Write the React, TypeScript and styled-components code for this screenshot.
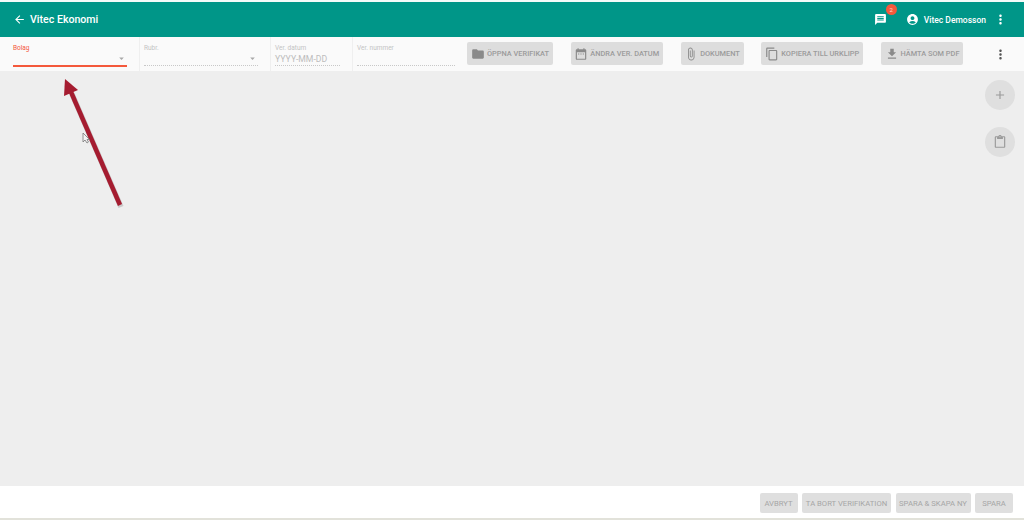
import { createGlobalStyle, styled } from 'styled-components'
import {
  MdAccountCircle,
  MdAdd,
  MdArrowBack,
  MdArrowDropDown,
  MdAttachFile,
  MdContentCopy,
  MdContentPaste,
  MdDateRange,
  MdFileDownload,
  MdFolder,
  MdMessage,
  MdMoreVert,
} from 'react-icons/md'

const GlobalStyle = createGlobalStyle`
  html, body {
    margin: 0;
    padding: 0;
    width: 100%;
    height: 100%;
    overflow: hidden;
    background: #ffffff;
    font-family: Roboto, "Liberation Sans", sans-serif;
  }
`

const toolButtons = [
  { label: 'ÖPPNA VERIFIKAT', width: 86, icon: <MdFolder size={14} /> },
  { label: 'ÄNDRA VER. DATUM', width: 92, icon: <MdDateRange size={14} /> },
  { label: 'DOKUMENT', width: 63, icon: <MdAttachFile size={14} /> },
  { label: 'KOPIERA TILL URKLIPP', width: 102, icon: <MdContentCopy size={14} /> },
  { label: 'HÄMTA SOM PDF', width: 82, icon: <MdFileDownload size={14} /> },
]

const footerButtons = [
  { label: 'AVBRYT', width: 38 },
  { label: 'TA BORT VERIFIKATION', width: 89 },
  { label: 'SPARA & SKAPA NY', width: 75 },
  { label: 'SPARA', width: 38 },
]

const App = () => {
  return (
    <Page>
      <GlobalStyle />
      <Header>
        <BackTitle>
          <MdArrowBack size={13} />
          <Title>Vitec Ekonomi</Title>
        </BackTitle>
        <HeaderRight>
          <MessageButton>
            <MdMessage size={13} />
            <Badge>2</Badge>
          </MessageButton>
          <UserBox>
            <MdAccountCircle size={13} />
            <UserName>Vitec Demosson</UserName>
          </UserBox>
          <MdMoreVert size={15} />
        </HeaderRight>
      </Header>

      <Toolbar>
        <Field width={114} pad={13} divider>
          <FieldLabel active>Bolag</FieldLabel>
          <SelectArrow>
            <MdArrowDropDown size={11} />
          </SelectArrow>
          <ActiveLine />
        </Field>
        <Field width={114} pad={5} divider>
          <FieldLabel>Rubr.</FieldLabel>
          <SelectArrow>
            <MdArrowDropDown size={11} />
          </SelectArrow>
          <FieldLine />
        </Field>
        <Field width={65} pad={5} divider>
          <FieldLabel>Ver. datum</FieldLabel>
          <FieldValue>YYYY-MM-DD</FieldValue>
          <FieldLine />
        </Field>
        <Field width={98} pad={5}>
          <FieldLabel>Ver. nummer</FieldLabel>
          <FieldLine />
        </Field>
        <ToolButtons>
          {toolButtons.map(item => (
            <ToolButton key={item.label} width={item.width}>
              {item.icon}
              <span>{item.label}</span>
            </ToolButton>
          ))}
        </ToolButtons>
        <ToolMenu>
          <MdMoreVert size={15} />
        </ToolMenu>
      </Toolbar>

      <Main>
        <Arrow width="80" height="135" viewBox="0 0 80 135">
          <line x1="8" y1="15" x2="57" y2="128" stroke="#00000026" strokeWidth="5.5" />
          <line x1="7" y1="13" x2="56" y2="126" stroke="#a51c30" strokeWidth="4.5" />
          <polygon points="1,0 0,17 14,11" fill="#a51c30" />
        </Arrow>
        <Cursor width="8" height="12" viewBox="0 0 8 12">
          <path d="M1 1 L1 10 L3 8 L5 11 L6.5 10 L5 7.5 L7.5 7.5 Z" fill="#f4f4f4" stroke="#777" strokeWidth="0.8" />
        </Cursor>
        <Fabs>
          <Fab>
            <MdAdd size={14} />
          </Fab>
          <Fab>
            <MdContentPaste size={14} />
          </Fab>
        </Fabs>
      </Main>

      <Footer>
        {footerButtons.map(item => (
          <FooterButton key={item.label} width={item.width}>
            {item.label}
          </FooterButton>
        ))}
      </Footer>
      <BottomEdge />
    </Page>
  )
}

export default App

const Page = styled.div`
  width: 1024px;
  height: 520px;
  display: flex;
  flex-direction: column;
  overflow: hidden;
  padding-top: 2px;
  box-sizing: border-box;
  background: #f4fbf9;
`

const Header = styled.header`
  height: 35px;
  flex: none;
  display: flex;
  align-items: center;
  justify-content: space-between;
  padding: 0 16px 0 13px;
  background: #009688;
  color: #ffffff;
`

const BackTitle = styled.div`
  display: flex;
  align-items: center;
  gap: 4px;
`

const Title = styled.div`
  font-size: 10.6px;
  font-weight: 500;
`

const HeaderRight = styled.div`
  display: flex;
  align-items: center;
`

const MessageButton = styled.div`
  position: relative;
  display: flex;
  margin-right: 19px;
`

const Badge = styled.span`
  position: absolute;
  top: -9px;
  right: -10px;
  width: 11px;
  height: 11px;
  border-radius: 50%;
  background: #f4593c;
  color: #ffd9d0;
  font-size: 6px;
  line-height: 11px;
  text-align: center;
`

const UserBox = styled.div`
  display: flex;
  align-items: center;
  gap: 5px;
  margin-right: 7px;
`

const UserName = styled.div`
  font-size: 8.5px;
  font-weight: 500;
`

const Toolbar = styled.div`
  height: 34px;
  flex: none;
  display: flex;
  background: #fafafa;
`

const Field = styled.div<{ width: number; pad: number; divider?: boolean }>`
  position: relative;
  width: ${props => props.width}px;
  flex: none;
  padding-left: ${props => props.pad}px;
  padding-right: 12px;
  border-right: 1px solid ${props => (props.divider ? '#efefef' : 'transparent')};
  box-sizing: content-box;
  display: flex;
  flex-direction: column;
  margin-right: -1px;
`

const FieldLabel = styled.div<{ active?: boolean }>`
  margin-top: 7px;
  height: 8px;
  font-size: 6.5px;
  line-height: 8px;
  color: ${props => (props.active ? '#f4593c' : '#c4c4c4')};
`

const FieldValue = styled.div`
  margin-top: 2px;
  font-size: 8.7px;
  line-height: 11px;
  color: #bdbdbd;
`

const FieldLine = styled.div`
  position: absolute;
  top: 28px;
  left: 5px;
  right: 12px;
  height: 0;
  border-top: 1px dotted #c8c8c8;
`

const ActiveLine = styled.div`
  position: absolute;
  top: 28px;
  left: 13px;
  right: 12px;
  height: 2px;
  background-color: #f4593c;
`

const SelectArrow = styled.div`
  position: absolute;
  top: 16px;
  right: 12px;
  display: flex;
  color: #a8a8a8;
`

const ToolButtons = styled.div`
  display: flex;
  align-items: flex-start;
  gap: 17.75px;
  padding-top: 5px;
`

const ToolButton = styled.div<{ width: number }>`
  width: ${props => props.width}px;
  height: 23px;
  flex: none;
  display: flex;
  align-items: center;
  justify-content: center;
  gap: 2px;
  border-radius: 2px;
  background: #dddddd;
  color: #9b9b9b;
  font-size: 7.4px;
  font-weight: 500;
  white-space: nowrap;

  svg {
    color: #8a8a8a;
    flex: none;
  }
`

const ToolMenu = styled.div`
  display: flex;
  align-items: center;
  margin-left: 29.5px;
  color: #555555;
`

const Main = styled.main`
  position: relative;
  flex: 1;
  background: #eeeeee;
`

const Arrow = styled.svg`
  position: absolute;
  left: 64px;
  top: 8px;
`

const Cursor = styled.svg`
  position: absolute;
  left: 82px;
  top: 61px;
`

const Fabs = styled.div`
  position: absolute;
  top: 9px;
  right: 9px;
  display: flex;
  flex-direction: column;
  gap: 17px;
`

const Fab = styled.div`
  width: 30px;
  height: 30px;
  border-radius: 50%;
  display: flex;
  align-items: center;
  justify-content: center;
  background: #dfdfdf;
  color: #9a9a9a;
`

const Footer = styled.footer`
  height: 32px;
  flex: none;
  display: flex;
  justify-content: flex-end;
  align-items: flex-start;
  gap: 4.5px;
  padding: 7px 11px 0 0;
  box-sizing: border-box;
  background: #ffffff;
`

const FooterButton = styled.div<{ width: number }>`
  width: ${props => props.width}px;
  height: 20px;
  flex: none;
  display: flex;
  align-items: center;
  justify-content: center;
  border-radius: 2px;
  background: #dfdfdf;
  color: #a6a6a6;
  font-size: 7.7px;
  font-weight: 400;
  white-space: nowrap;
`

const BottomEdge = styled.div`
  height: 2px;
  flex: none;
  background: #e2e2da;
`
